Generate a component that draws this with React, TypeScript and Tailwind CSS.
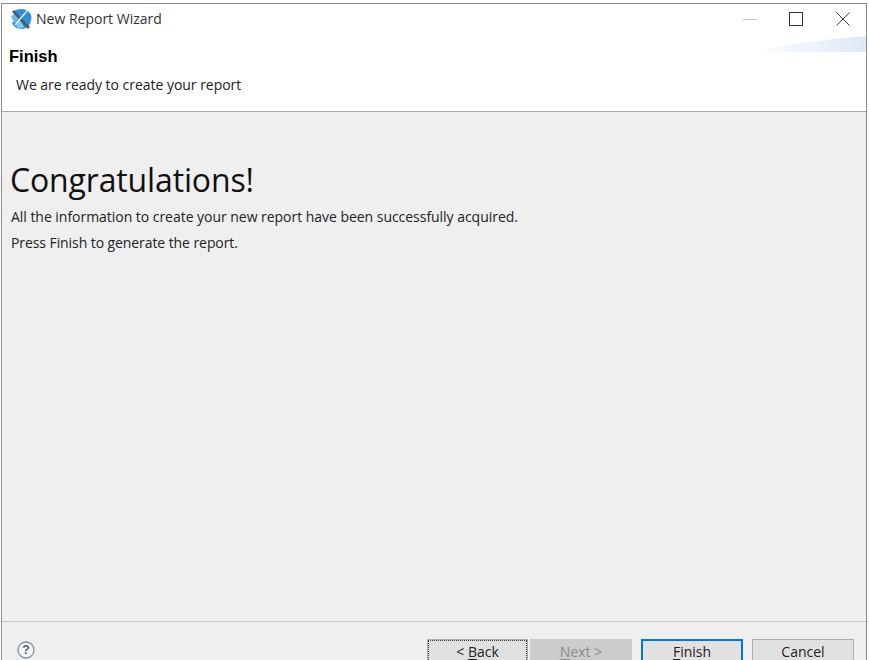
const font = "font-['Open_Sans','Noto_Sans',sans-serif]";

function AppIcon() {
  return (
    <svg width="22" height="22" viewBox="0 0 22 22" className="shrink-0">
      <path d="M4 3 C8 0 16 0 20 5 C23 10 21 17 16 20 C11 22 5 21 2 15 L6 11 Z" fill="#2f8fd8" />
      <path d="M1 8 L6 5 L10 11 L4 15 Z" fill="#6fbcec" />
      <path d="M5 16 L10 12 L14 19 L9 21 Z" fill="#86c8f0" />
      <path d="M3 3 L19 20" stroke="#4d5a66" strokeWidth="2.6" />
      <path d="M17 3 L10 11 L5 17" stroke="#e3f0fa" strokeWidth="1.4" fill="none" />
    </svg>
  );
}

function WizardButton({
  mnemonic,
  rest,
  before,
  className,
}: {
  mnemonic?: string;
  rest?: string;
  before?: string;
  className: string;
}) {
  return (
    <button className={`h-[32px] flex justify-center text-[14px] leading-[20px] border whitespace-pre ${className}`}>
      {before}
      {mnemonic && <span className="underline underline-offset-2">{mnemonic}</span>}
      {rest}
    </button>
  );
}

export default function App() {
  return (
    <div className={`h-[660px] w-[869px] overflow-hidden bg-white pt-[3px] pl-[1px] pr-[2px] ${font}`}>
      <div className="relative h-[700px] border border-[#8a8a8a] flex flex-col bg-white">
        <svg width="118" height="18" viewBox="0 0 118 18" className="absolute right-0 top-[31px]">
          <defs>
            <linearGradient id="banner" x1="0" x2="1" y1="0" y2="0">
              <stop offset="0" stopColor="#ffffff" />
              <stop offset="0.55" stopColor="#eef3fb" />
              <stop offset="1" stopColor="#dfe8f7" />
            </linearGradient>
          </defs>
          <path d="M0 17 C40 10 75 4 118 1 L118 17 Z" fill="url(#banner)" />
        </svg>

        <div className="relative flex items-center h-[30px] pl-[8px] pr-[16px]">
          <AppIcon />
          <span className="ml-[4px] mb-[2px] text-[14px] text-[#333333]">New Report Wizard</span>
          <div className="ml-auto flex items-center">
            <div className="w-[14px] h-px bg-[#c4c4c4]" />
            <div className="ml-[32px] w-[14px] h-[14px] border border-[#333333]" />
            <svg width="14" height="14" viewBox="0 0 14 14" className="ml-[33px]">
              <path d="M0.5 0.5 L13.5 13.5 M13.5 0.5 L0.5 13.5" stroke="#444444" strokeWidth="1" />
            </svg>
          </div>
        </div>

        <div className="relative h-[78px] border-b border-[#a8a8a8] shrink-0 pl-[7px] pt-[12px]">
          <div className="font-['Liberation_Sans',sans-serif] font-bold text-[16.5px] leading-[20px] text-black">Finish</div>
          <div className="ml-[7px] mt-[9px] text-[14px] leading-[20px] text-[#222222] tracking-[-0.03px]">We are ready to create your report</div>
        </div>

        <div className="h-[510px] shrink-0 bg-[#efefef] border-b border-[#c9c9c9] pl-[9px] pt-[46px]">
          <h1 className="-ml-[1px] text-[32px] leading-[44px] text-[#111111] tracking-[-0.15px]">Congratulations!</h1>
          <p className="mt-[5px] text-[14px] leading-[20px] text-[#222222] tracking-[-0.035px]">All the information to create your new report have been successfully acquired.</p>
          <p className="mt-[6px] text-[14px] leading-[20px] text-[#222222] tracking-[-0.08px]">Press Finish to generate the report.</p>
        </div>

        <div className="flex-1 bg-[#efefef] flex items-start pl-[15px] pr-[12px] pt-[17px]">
          <svg width="18" height="18" viewBox="0 0 18 18" className="mt-[2px]">
            <circle cx="9" cy="9" r="8" fill="#f4f6f9" stroke="#7d8ea8" strokeWidth="1.3" />
            <text x="9" y="13.2" textAnchor="middle" fontSize="12" fontWeight="700" fontFamily="Liberation Sans" fill="#4f5f78">?</text>
          </svg>
          <div className="ml-auto flex">
            <WizardButton
              before="< "
              mnemonic="B"
              rest="ack"
              className="w-[101px] pt-[2px] bg-[#e1e1e1] border-[#adadad] outline-1 outline-dotted -outline-offset-2 outline-[#333333] text-[#222222]"
            />
            <WizardButton
              mnemonic="N"
              rest="ext >"
              className="ml-[2px] w-[102px] pt-[2px] bg-[#cccccc] border-[#cccccc] text-[#8a8a8a]"
            />
            <WizardButton
              mnemonic="F"
              rest="inish"
              className="ml-[9px] w-[102px] pt-[1px] bg-[#e1e1e1] border-[#0078d7] border-2 text-[#222222]"
            />
            <WizardButton rest="Cancel" className="ml-[9px] w-[102px] pt-[2px] bg-[#e1e1e1] border-[#adadad] text-[#222222]" />
          </div>
        </div>
      </div>
    </div>
  );
}
